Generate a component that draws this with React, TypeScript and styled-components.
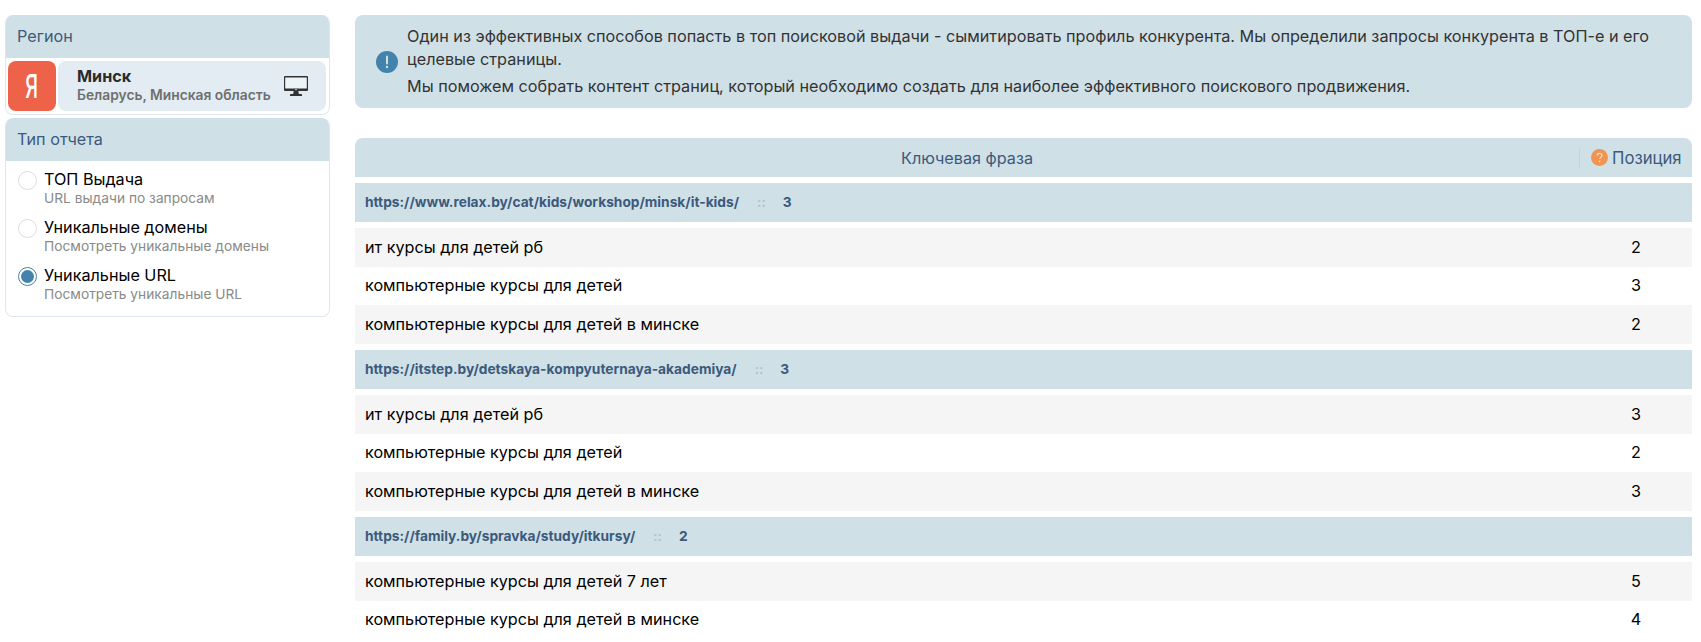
import React from 'react';
import styled, { createGlobalStyle } from 'styled-components';

const GlobalStyle = createGlobalStyle`
  html, body {
    margin: 0;
    padding: 0;
    height: 642px;
    overflow: hidden;
    background: #fff;
  }
  body {
    font-family: Inter, "Liberation Sans", sans-serif;
    color: #000;
  }
  * {
    box-sizing: border-box;
  }
`;

const Page = styled.div`
  display: grid;
  grid-template-columns: 325px 1fr;
  column-gap: 25px;
  padding: 15px 9px 0 5px;
  width: 1701px;
`;

const Sidebar = styled.aside`
  display: flex;
  flex-direction: column;
  gap: 3px;
`;

const Panel = styled.section`
  background: #fff;
  border: 1px solid #dfe7ec;
  border-top: 0;
  border-radius: 8px;
  overflow: hidden;
`;

const PanelTitle = styled.div`
  height: 43px;
  margin: 0 -1px;
  padding: 0 0 2px 12px;
  display: flex;
  align-items: center;
  background: #d0e0e7;
  color: #3b5a7c;
  font-size: 16.2px;
`;

const RegionBody = styled.div`
  display: flex;
  gap: 2px;
  padding: 3px 3px 3px 2px;
`;

const EngineLogo = styled.div`
  width: 48px;
  height: 50px;
  flex: none;
  display: flex;
  align-items: center;
  justify-content: center;
  border-radius: 8px;
  background: #ee6249;
  color: #fff;
  font-size: 33px;
  font-weight: 500;
  span {
    display: block;
    transform: scaleX(0.6);
  }
`;

const RegionCard = styled.div`
  flex: 1;
  display: flex;
  align-items: center;
  justify-content: space-between;
  padding: 0 18px 0 19px;
  border-radius: 8px;
  background: #e3ecf2;
`;

const RegionText = styled.div`
  padding-bottom: 2px;
`;

const RegionCity = styled.div`
  font-size: 16.2px;
  font-weight: 700;
  line-height: 19px;
  color: #2b2b2b;
`;

const RegionArea = styled.div`
  font-size: 13.8px;
  font-weight: 600;
  line-height: 18px;
  color: #6f6f6f;
`;

const ReportList = styled.div`
  display: flex;
  flex-direction: column;
  padding: 10px 12px 1px;
`;

const ReportOption = styled.label`
  display: grid;
  grid-template-columns: 19px 1fr;
  column-gap: 7px;
  height: 48px;
`;

const Radio = styled.span<{ $checked?: boolean }>`
  width: 19px;
  height: 19px;
  border-radius: 50%;
  border: 1px solid ${({ $checked }) => ($checked ? '#4383ab' : '#dcdcdc')};
  background: #fff;
  display: flex;
  align-items: center;
  justify-content: center;
  &::after {
    content: '';
    display: ${({ $checked }) => ($checked ? 'block' : 'none')};
    width: 13px;
    height: 13px;
    border-radius: 50%;
    background: #4383ab;
  }
`;

const OptionText = styled.div`
  margin-top: -1px;
`;

const OptionName = styled.div`
  font-size: 16.2px;
  line-height: 19px;
  color: #000;
`;

const OptionHint = styled.div`
  font-size: 13.76px;
  line-height: 18px;
  color: #8a8a8a;
`;

const Content = styled.main`
  display: flex;
  flex-direction: column;
  min-width: 0;
`;

const Notice = styled.div`
  height: 93px;
  margin-bottom: 30px;
  padding: 0 20px 0 21px;
  display: flex;
  align-items: center;
  gap: 9px;
  background: #d0e0e7;
  border-radius: 8px;
`;

const NoticeText = styled.div`
  font-size: 16.23px;
  line-height: 23px;
  color: #333;
  p {
    margin: 0;
  }
  p + p {
    margin-top: 4px;
  }
`;

const TableHead = styled.div`
  height: 39px;
  display: grid;
  grid-template-columns: 1fr 113px;
  align-items: center;
  background: #d0e0e7;
  border-radius: 8px 8px 0 0;
  color: #3b5a7c;
  font-size: 16.2px;
`;

const PhraseHead = styled.div`
  text-align: center;
`;

const PositionHead = styled.div`
  height: 20px;
  display: flex;
  align-items: center;
  gap: 4px;
  padding-left: 11px;
  border-left: 1px solid #c3d4dc;
  font-size: 16.7px;
`;

const UrlRow = styled.div`
  height: 39px;
  margin: 6px 0;
  padding: 0 0 1px 10px;
  display: flex;
  align-items: center;
  background: #d0e0e7;
  color: #3b5a7c;
  font-size: 13.76px;
  font-weight: 700;
`;

const Separator = styled.span`
  margin: 0 17px 0 18px;
  color: #b4c4cc;
  font-size: 13px;
`;

const PhraseGroup = styled.div`
  display: flex;
  flex-direction: column;
`;

const PhraseRow = styled.div<{ $shaded: boolean }>`
  height: 38.67px;
  padding: 0 0 1px 10px;
  display: grid;
  grid-template-columns: 1fr 112px;
  align-items: center;
  font-size: 16.2px;
  color: #000;
  background: ${({ $shaded }) => ($shaded ? '#f5f5f5' : '#fff')};
`;

const PositionCell = styled.div`
  text-align: center;
`;

const MonitorIcon = () => (
  <svg width="24" height="20" viewBox="0 0 24 20" aria-hidden="true">
    <rect x="1" y="1" width="22" height="11.5" fill="#eef3f6" />
    <path
      fillRule="evenodd"
      d="M1 0h22a1 1 0 0 1 1 1v13a1 1 0 0 1-1 1H1a1 1 0 0 1-1-1V1a1 1 0 0 1 1-1zm.2 1.6v10.9h21.6V1.6z"
      fill="#333"
    />
    <circle cx="12" cy="13.8" r=".7" fill="#eef3f6" />
    <path d="M9.7 15h4.6l.6 3H9.1z" fill="#333" />
    <rect x="6" y="18" width="12" height="2" rx=".6" fill="#333" />
  </svg>
);

const InfoIcon = () => (
  <svg width="22" height="22" viewBox="0 0 22 22" style={{ flex: 'none' }} aria-hidden="true">
    <circle cx="11" cy="11" r="11" fill="#4383ab" />
    <path d="M11 5.5v7" stroke="#d0e0e7" strokeWidth="2" strokeLinecap="round" />
    <circle cx="11" cy="16" r="1.2" fill="#d0e0e7" />
  </svg>
);

const HelpIcon = () => (
  <svg width="17" height="17" viewBox="0 0 17 17" aria-hidden="true">
    <circle cx="8.5" cy="8.5" r="8.5" fill="#f29350" />
    <path
      d="M6.2 6.6c0-1.4 1-2.2 2.4-2.2s2.3.8 2.3 2c0 1-.6 1.5-1.3 2-.6.4-.9.7-.9 1.5"
      fill="none"
      stroke="#fbe3d2"
      strokeWidth="1.2"
    />
    <circle cx="8.6" cy="12.4" r=".8" fill="#fbe3d2" />
  </svg>
);

const groups = [
  {
    url: 'https://www.relax.by/cat/kids/workshop/minsk/it-kids/',
    count: 3,
    rows: [
      ['ит курсы для детей рб', 2],
      ['компьютерные курсы для детей', 3],
      ['компьютерные курсы для детей в минске', 2],
    ],
  },
  {
    url: 'https://itstep.by/detskaya-kompyuternaya-akademiya/',
    count: 3,
    rows: [
      ['ит курсы для детей рб', 3],
      ['компьютерные курсы для детей', 2],
      ['компьютерные курсы для детей в минске', 3],
    ],
  },
  {
    url: 'https://family.by/spravka/study/itkursy/',
    count: 2,
    rows: [
      ['компьютерные курсы для детей 7 лет', 5],
      ['компьютерные курсы для детей в минске', 4],
    ],
  },
];

const reports = [
  { name: 'ТОП Выдача', hint: 'URL выдачи по запросам' },
  { name: 'Уникальные домены', hint: 'Посмотреть уникальные домены' },
  { name: 'Уникальные URL', hint: 'Посмотреть уникальные URL', checked: true },
];

export default function App() {
  return (
    <>
      <GlobalStyle />
      <Page>
        <Sidebar>
          <Panel>
            <PanelTitle>Регион</PanelTitle>
            <RegionBody>
              <EngineLogo>
                <span>Я</span>
              </EngineLogo>
              <RegionCard>
                <RegionText>
                  <RegionCity>Минск</RegionCity>
                  <RegionArea>Беларусь, Минская область</RegionArea>
                </RegionText>
                <MonitorIcon />
              </RegionCard>
            </RegionBody>
          </Panel>
          <Panel>
            <PanelTitle>Тип отчета</PanelTitle>
            <ReportList>
              {reports.map((r) => (
                <ReportOption key={r.name}>
                  <Radio $checked={r.checked} />
                  <OptionText>
                    <OptionName>{r.name}</OptionName>
                    <OptionHint>{r.hint}</OptionHint>
                  </OptionText>
                </ReportOption>
              ))}
            </ReportList>
          </Panel>
        </Sidebar>
        <Content>
          <Notice>
            <InfoIcon />
            <NoticeText>
              <p>
                Один из эффективных способов попасть в топ поисковой выдачи - сымитировать профиль конкурента. Мы
                определили запросы конкурента в ТОП-е и его целевые страницы.
              </p>
              <p>Мы поможем собрать контент страниц, который необходимо создать для наиболее эффективного поискового продвижения.</p>
            </NoticeText>
          </Notice>
          <TableHead>
            <PhraseHead>Ключевая фраза</PhraseHead>
            <PositionHead>
              <HelpIcon />
              Позиция
            </PositionHead>
          </TableHead>
          {groups.map((g) => (
            <React.Fragment key={g.url}>
              <UrlRow>
                {g.url}
                <Separator>::</Separator>
                {g.count}
              </UrlRow>
              <PhraseGroup>
                {g.rows.map(([phrase, pos], i) => (
                  <PhraseRow key={phrase} $shaded={i % 2 === 0}>
                    <div>{phrase}</div>
                    <PositionCell>{pos}</PositionCell>
                  </PhraseRow>
                ))}
              </PhraseGroup>
            </React.Fragment>
          ))}
        </Content>
      </Page>
    </>
  );
}
